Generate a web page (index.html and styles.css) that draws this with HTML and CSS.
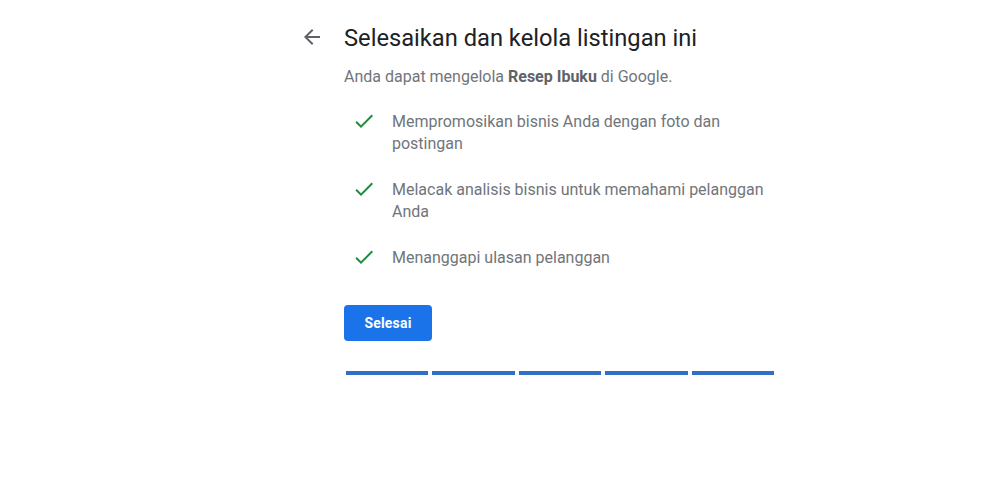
FILE: index.html
```html
<!DOCTYPE html>
<html lang="id">
<head>
    <meta charset="UTF-8">
    <title>Selesaikan dan kelola listingan ini</title>
    <link rel="stylesheet" href="styles.css">
</head>
<body>
    <div class="page">
        <div class="back">
            <svg width="24" height="24" viewBox="0 0 24 24"><path d="M20 11H7.83l5.59-5.59L12 4l-8 8 8 8 1.41-1.41L7.83 13H20v-2z" fill="#5f6368"/></svg>
        </div>
        <div class="content">
            <h1>Selesaikan dan kelola listingan ini</h1>
            <p class="intro">Anda dapat mengelola <b>Resep Ibuku</b> di Google.</p>
            <ul class="benefits">
                <li>
                    <svg class="check" width="24" height="24" viewBox="0 0 24 24"><path d="M9 16.17L4.83 12l-1.42 1.41L9 19 21 7l-1.41-1.41z" fill="#1e8e3e"/></svg>
                    <span>Mempromosikan bisnis Anda dengan foto dan postingan</span>
                </li>
                <li>
                    <svg class="check" width="24" height="24" viewBox="0 0 24 24"><path d="M9 16.17L4.83 12l-1.42 1.41L9 19 21 7l-1.41-1.41z" fill="#1e8e3e"/></svg>
                    <span>Melacak analisis bisnis untuk memahami pelanggan Anda</span>
                </li>
                <li>
                    <svg class="check" width="24" height="24" viewBox="0 0 24 24"><path d="M9 16.17L4.83 12l-1.42 1.41L9 19 21 7l-1.41-1.41z" fill="#1e8e3e"/></svg>
                    <span>Menanggapi ulasan pelanggan</span>
                </li>
            </ul>
            <button class="done">Selesai</button>
            <div class="progress">
                <span></span><span></span><span></span><span></span><span></span>
            </div>
        </div>
    </div>
</body>
</html>
```
FILE: styles.css
```css
body {
    margin: 0;
    font-family: Roboto, Arial, sans-serif;
    background: #fff;
}
.page {
    display: flex;
    padding: 24px 0 0 300px;
}
.back {
    width: 24px;
    height: 24px;
    margin-top: 1px;
    margin-right: 20px;
}
.content {
    width: 440px;
}
h1 {
    margin: 0;
    font-size: 23.7px;
    font-weight: 400;
    line-height: 28px;
    color: #202124;
}
.intro {
    margin: 14px 0 0;
    font-size: 16px;
    line-height: 22px;
    color: #70757a;
}
.intro b {
    font-weight: 700;
    color: #5f6368;
}
.benefits {
    list-style: none;
    margin: 23px 0 0;
    padding: 0;
}
.benefits li {
    display: flex;
    align-items: flex-start;
    margin-bottom: 24px;
    font-size: 16px;
    line-height: 22px;
    color: #70757a;
}
.check {
    flex: none;
    margin: -2px 16px 0 8px;
}
.done {
    display: block;
    margin-top: 36px;
    width: 88px;
    height: 36px;
    border: none;
    border-radius: 4px;
    background: #1a73e8;
    color: #fff;
    font-family: Roboto, Arial, sans-serif;
    font-size: 14px;
    font-weight: 700;
    letter-spacing: 0.2px;
    cursor: pointer;
}
.progress {
    display: flex;
    gap: 4px;
    margin: 30px 0 0 2px;
    width: 428px;
}
.progress span {
    flex: 1;
    height: 4px;
    background: #2f6fc6;
}
```
